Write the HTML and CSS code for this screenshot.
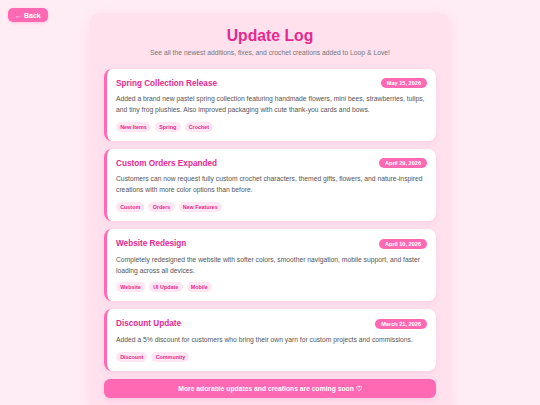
FILE: index.html
```html
<!DOCTYPE html>
<html lang="en">
<head>
<meta charset="utf-8">
<title>Update Log</title>
<link rel="stylesheet" href="styles.css">
</head>
<body>
<a class="back" href="#">← Back</a>
<div class="page">
  <main class="panel">
    <h1 class="title">Update Log</h1>
    <p class="subtitle">See all the newest additions, fixes, and crochet creations added to Loop &amp; Love!</p>
    <div class="cards">
      <article class="card">
        <div class="card-head">
          <h2 class="card-title">Spring Collection Release</h2>
          <span class="date">May 15, 2026</span>
        </div>
        <p class="desc">Added a brand new pastel spring collection featuring handmade flowers, mini bees, strawberries, tulips, and tiny frog plushies. Also improved packaging with cute thank-you cards and bows.</p>
        <div class="tags"><span class="tag">New Items</span><span class="tag">Spring</span><span class="tag">Crochet</span></div>
      </article>
      <article class="card">
        <div class="card-head">
          <h2 class="card-title">Custom Orders Expanded</h2>
          <span class="date">April 29, 2026</span>
        </div>
        <p class="desc">Customers can now request fully custom crochet characters, themed gifts, flowers, and nature-inspired creations with more color options than before.</p>
        <div class="tags"><span class="tag">Custom</span><span class="tag">Orders</span><span class="tag">New Features</span></div>
      </article>
      <article class="card">
        <div class="card-head">
          <h2 class="card-title">Website Redesign</h2>
          <span class="date">April 10, 2026</span>
        </div>
        <p class="desc">Completely redesigned the website with softer colors, smoother navigation, mobile support, and faster loading across all devices.</p>
        <div class="tags"><span class="tag">Website</span><span class="tag">UI Update</span><span class="tag">Mobile</span></div>
      </article>
      <article class="card">
        <div class="card-head">
          <h2 class="card-title">Discount Update</h2>
          <span class="date">March 21, 2026</span>
        </div>
        <p class="desc">Added a 5% discount for customers who bring their own yarn for custom projects and commissions.</p>
        <div class="tags"><span class="tag">Discount</span><span class="tag">Community</span></div>
      </article>
    </div>
    <div class="footer-note">More adorable updates and creations are coming soon ♡</div>
  </main>
</div>
</body>
</html>
```

FILE: styles.css
```css
* { box-sizing: border-box; }

html, body {
  margin: 0;
  padding: 0;
}

body {
  background: #ffedf5;
  font-family: "Liberation Sans", Arial, sans-serif;
  color: #555;
}

.back {
  position: absolute;
  top: 8px;
  left: 8px;
  background: #ff69b4;
  color: #fff;
  font-weight: bold;
  font-size: 7px;
  line-height: 7.4px;
  padding: 3.5px 7px;
  border-radius: 5px;
  text-decoration: none;
  box-shadow: 0 1px 3px rgba(255, 105, 180, 0.3);
}

.page {
  padding-top: 13px;
}

.panel {
  width: 360px;
  margin: 0 auto;
  background: #ffe1ee;
  border-radius: 10px;
  padding: 13.5px 14px 14px;
  box-shadow: 0 4px 14px rgba(255, 150, 195, 0.25);
}

.title {
  margin: 0;
  text-align: center;
  font-size: 15.75px;
  font-weight: bold;
  color: #e8288f;
  line-height: normal;
}

.subtitle {
  margin: 4.5px 0 12.5px;
  text-align: center;
  font-size: 6.75px;
  color: #777;
  line-height: normal;
}

.cards {
  display: flex;
  flex-direction: column;
  gap: 8px;
}

.card {
  background: #fff;
  border-left: 3px solid #ff69b4;
  border-radius: 8px;
  padding: 9.5px 9px 9px 9px;
  box-shadow: 0 2px 6px rgba(255, 105, 180, 0.14);
}

.card-head {
  display: flex;
  justify-content: space-between;
  align-items: center;
}

.card-title {
  margin: 0;
  font-size: 8.2px;
  font-weight: bold;
  color: #e8288f;
  line-height: normal;
}

.date {
  background: #ff69b4;
  color: #fff;
  font-size: 5.6px;
  font-weight: bold;
  line-height: 6px;
  padding: 2px 6px;
  border-radius: 10px;
}

.desc {
  margin: 5px 0 6.75px;
  font-size: 6.75px;
  line-height: 11px;
  color: #555;
}

.tags {
  display: flex;
  gap: 4px;
}

.tag {
  background: #ffe6f2;
  color: #e8288f;
  font-size: 5.4px;
  font-weight: bold;
  line-height: 6px;
  padding: 2px 4.2px;
  border-radius: 10px;
}

.footer-note {
  margin-top: 8px;
  background: #ff69b4;
  color: #fff;
  font-weight: bold;
  font-size: 6.75px;
  line-height: 19.3px;
  text-align: center;
  border-radius: 6px;
  box-shadow: 0 2px 6px rgba(255, 105, 180, 0.2);
}
```
